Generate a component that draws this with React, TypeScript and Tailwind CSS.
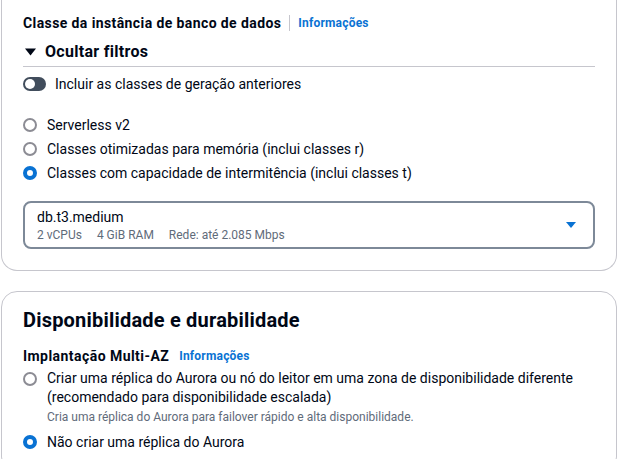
const font = { fontFamily: 'Roboto, "Noto Sans", sans-serif' }

const Info = () => (
  <a className="text-[12px] font-bold text-[#0972d3] tracking-[0.2px]">Informações</a>
)

const Radio = ({ checked }: { checked?: boolean }) =>
  checked ? (
    <span className="mt-[3px] size-[14px] shrink-0 rounded-full border-[4px] border-[#0972d3] bg-white" />
  ) : (
    <span className="mt-[3px] size-[14px] shrink-0 rounded-full border-2 border-[#8c8c94] bg-white" />
  )

const RadioRow = ({ label, checked }: { label: string; checked?: boolean }) => (
  <div className="flex items-start gap-[10px]">
    <Radio checked={checked} />
    <span className="text-[14px] leading-[20px] text-[#000716]">{label}</span>
  </div>
)

export default function App() {
  return (
    <div className="h-[459px] w-[627px] overflow-hidden bg-white" style={font}>
      <div className="ml-[1px] w-[616px] rounded-b-2xl border border-t-0 border-[#c6c6cd] px-[21px] pb-[21px] pt-[13px]">
        <div className="flex items-center">
          <span className="text-[14px] font-bold leading-[20px] tracking-[0.4px] text-[#000716]">
            Classe da instância de banco de dados
          </span>
          <span className="mx-[8px] h-[16px] w-px bg-[#c6c6cd]" />
          <Info />
        </div>
        <div className="mt-[8px] flex items-center gap-[9px] border-b border-[#c6c6cd] pb-[3px]">
          <svg width="11" height="8" viewBox="0 0 11 8" className="ml-[2px]">
            <path d="M0 0.5h11L5.5 7.5z" fill="#000716" />
          </svg>
          <span className="text-[16px] font-bold leading-[22px] tracking-[0.3px] text-[#000716]">
            Ocultar filtros
          </span>
        </div>
        <div className="mt-[7px] flex items-center gap-[9px]">
          <span className="flex h-[14px] w-[23px] items-center rounded-full bg-[#414d5c] px-[2px]">
            <span className="size-[10px] rounded-full bg-white" />
          </span>
          <span className="text-[14px] leading-[20px] text-[#000716]">
            Incluir as classes de geração anteriores
          </span>
        </div>
        <div className="mt-[21px] flex flex-col gap-[4px]">
          <RadioRow label="Serverless v2" />
          <RadioRow label="Classes otimizadas para memória (inclui classes r)" />
          <RadioRow label="Classes com capacidade de intermitência (inclui classes t)" checked />
        </div>
        <div className="mt-[18px] flex items-center justify-between rounded-lg border-2 border-[#7d8998] px-[12px] py-[4px]">
          <div className="flex flex-col">
            <span className="text-[14px] leading-[20px] text-[#000716]">db.t3.medium</span>
            <div className="flex gap-[15px] text-[12px] leading-[16px] text-[#5f6b7a]">
              <span>2 vCPUs</span>
              <span>4 GiB RAM</span>
              <span>Rede: até 2.085 Mbps</span>
            </div>
          </div>
          <svg width="12" height="8" viewBox="0 0 12 8" className="mr-[4px]">
            <path d="M1 1h10L6 7z" fill="#0972d3" />
          </svg>
        </div>
      </div>

      <div className="ml-[1px] mt-[20px] w-[616px] rounded-2xl border border-[#c6c6cd] px-[21px] pt-[15px] pb-[20px]">
        <h2 className="text-[20px] font-bold leading-[26px] tracking-[0.2px] text-[#000716]">
          Disponibilidade e durabilidade
        </h2>
        <div className="mt-[13px] flex items-center gap-[10px]">
          <span className="text-[14px] font-bold leading-[20px] tracking-[0.45px] text-[#000716]">
            Implantação Multi-AZ
          </span>
          <Info />
        </div>
        <div className="mt-[3px] flex flex-col gap-[7px]">
          <div className="flex items-start gap-[10px]">
            <Radio />
            <div className="flex flex-col">
              <span className="text-[14px] leading-[19px] text-[#000716]">
                Criar uma réplica do Aurora ou nó do leitor em uma zona de disponibilidade diferente
                (recomendado para disponibilidade escalada)
              </span>
              <span className="mt-[2px] text-[12px] leading-[16px] text-[#5f6b7a]">
                Cria uma réplica do Aurora para failover rápido e alta disponibilidade.
              </span>
            </div>
          </div>
          <RadioRow label="Não criar uma réplica do Aurora" checked />
        </div>
      </div>
    </div>
  )
}
